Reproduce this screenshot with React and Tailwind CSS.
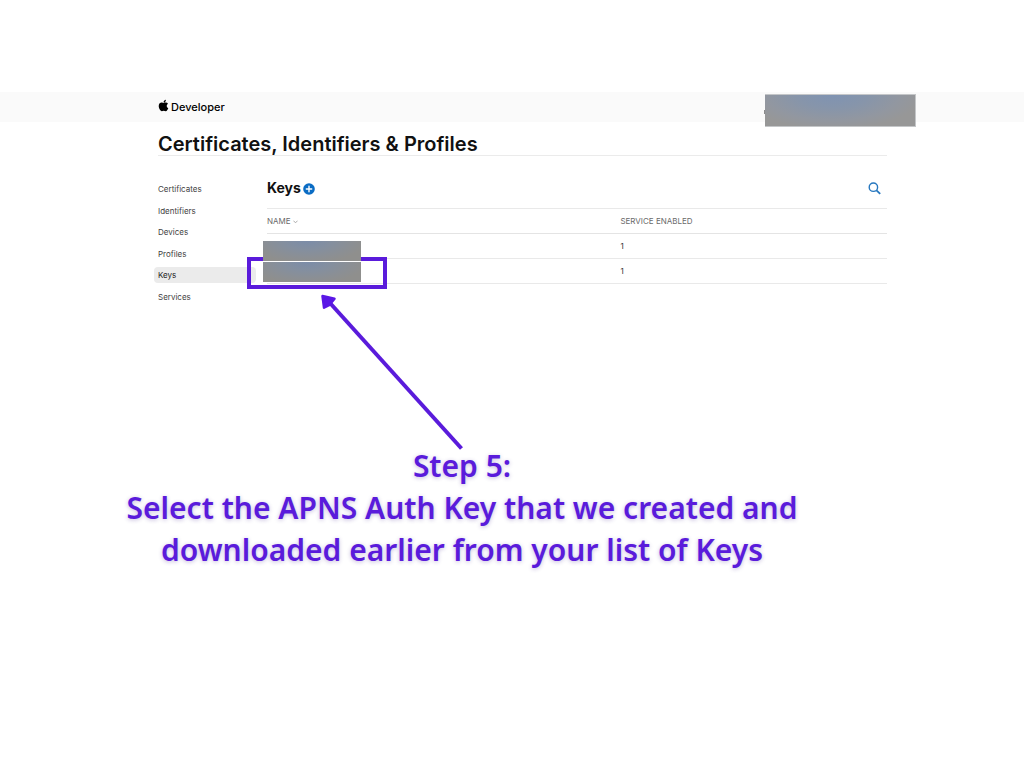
import { FaApple } from "react-icons/fa";

const navItems = ["Certificates", "Identifiers", "Devices", "Profiles", "Keys", "Services"];

const rows = [
  { id: "first", services: 1 },
  { id: "second", services: 1 },
];

function Header() {
  return (
    <header className="relative flex h-[30px] items-center bg-[#fafafa] pl-[157px] text-black">
      <a href="#developer" className="flex items-center gap-px text-[11px] leading-4 font-medium">
        <FaApple className="mb-[3px] size-[13px] shrink-0" aria-hidden="true" />
        Developer
      </a>
      <span className="absolute top-[18px] right-[258px] h-[4px] w-[2px] bg-[#8c8c8c]" />
      <div className="absolute top-[2px] right-[108px] h-[33px] w-[151px] border-y border-r border-[#c4c6c8] bg-[radial-gradient(ellipse_60%_110%_at_45%_0%,#7f93b2_0%,#8795aa_40%,#9297a0_75%,#979797_100%)]" />
    </header>
  );
}

function Sidebar() {
  return (
    <nav className="mt-px -ml-1 flex h-[124px] w-[102px] shrink-0 flex-col justify-between">
      {navItems.map((item) => (
        <a
          key={item}
          href={`#${item.toLowerCase()}`}
          className={`block h-4 rounded-sm pl-1 text-[8px] leading-4 ${
            item === "Keys" ? "bg-[#ebebeb] text-[#222222]" : "text-[#3f3f3f]"
          }`}
        >
          {item}
        </a>
      ))}
    </nav>
  );
}

function KeysPanel() {
  return (
    <section className="ml-[11px] min-w-0 grow">
      <div className="flex h-[28px] items-start justify-between pr-[6px]">
        <h2 className="flex items-center gap-[2px] text-[14px] leading-4 font-bold text-[#111111]">
          Keys
          <button type="button" aria-label="Create a key" className="mt-px">
            <svg className="block size-3" viewBox="0 0 12 12" aria-hidden="true">
              <circle cx="6" cy="6" r="5.8" fill="#0a6cc4" />
              <path d="M6 3.3v5.4M3.3 6h5.4" stroke="#fff" strokeWidth="1.4" strokeLinecap="round" />
            </svg>
          </button>
        </h2>
        <button type="button" aria-label="Search" className="mt-[2px]">
          <svg className="block size-[13px]" viewBox="0 0 13 13" fill="none" stroke="#2677bf" aria-hidden="true">
            <circle cx="5.4" cy="5.2" r="4.2" strokeWidth="1.4" />
            <path d="M8.5 8.3l3.7 3.6" strokeWidth="1.8" />
          </svg>
        </button>
      </div>
      <div className="relative">
        <table className="w-full table-fixed border-collapse border-y border-[#e9e9e9] text-left text-[8px] leading-4">
          <thead>
            <tr className="h-[25px] border-b border-[#e4e4e4] text-[#6a6a6a]">
              <th scope="col" className="w-[57%] p-0 font-normal">
                <button type="button" className="flex items-center gap-[2px]">
                  NAME
                  <svg className="size-[5px]" viewBox="0 0 5 5" fill="none" stroke="#888" aria-hidden="true">
                    <path d="M.5 2l2 1.5 2-1.5" strokeWidth=".7" />
                  </svg>
                </button>
              </th>
              <th scope="col" className="p-0 font-normal">SERVICE ENABLED</th>
            </tr>
          </thead>
          <tbody>
            {rows.map((row) => (
              <tr key={row.id} className="h-[25px] border-b border-[#e9e9e9] text-[#333333]">
                <td className="p-0" />
                <td className="p-0">{row.services}</td>
              </tr>
            ))}
          </tbody>
        </table>
        <Callout />
      </div>
    </section>
  );
}

function Callout() {
  return (
    <>
      <div className="absolute top-[49px] -left-[20px] h-[32px] w-[140px] border-4 border-[#5a1bdb]" />
      <div className="absolute top-[33px] -left-[4px] flex w-[98px] flex-col gap-px bg-white">
        {rows.map((row) => (
          <div
            key={row.id}
            className="h-[20px] bg-[radial-gradient(ellipse_60%_110%_at_45%_0%,#7b8ca8_0%,#848f9f_40%,#8b8f94_75%,#8f8f8d_100%)]"
          />
        ))}
      </div>
      <svg className="absolute top-[86px] left-[54px] h-[156px] w-[144px]" viewBox="0 0 144 156" aria-hidden="true">
        <path d="M9 9L140.500 154.500" stroke="#5a1bdb" strokeWidth="4" />
        <path d="M1.500 2L13.500 4.700L10 9L7.500 11.500L3 13.700Z" fill="#5a17e6" stroke="#5a17e6" strokeWidth="2.500" strokeLinejoin="round" />
      </svg>
    </>
  );
}

export default function App() {
  return (
    <div className="min-h-screen bg-white pt-[92px] font-['Inter',sans-serif]">
      <Header />
      <main>
        <div className="pr-[137px] pl-[158px]">
          <h1 className="border-b border-[#ebebeb] pt-[11px] text-[20px] leading-[22px] font-semibold text-[#111111]">
            Certificates, Identifiers &amp; Profiles
          </h1>
          <div className="flex pt-[24px]">
            <Sidebar />
            <KeysPanel />
          </div>
        </div>
        <p className="mt-[140px] pr-[100px] text-center font-['Noto_Sans',sans-serif] text-[30px] leading-[42px] font-semibold text-[#5a1bdb] [text-shadow:0_1px_4px_rgba(60,30,140,0.3)]">
          Step 5:
          <br />
          Select the APNS Auth Key that we created and
          <br />
          downloaded earlier from your list of Keys
        </p>
      </main>
    </div>
  );
}
